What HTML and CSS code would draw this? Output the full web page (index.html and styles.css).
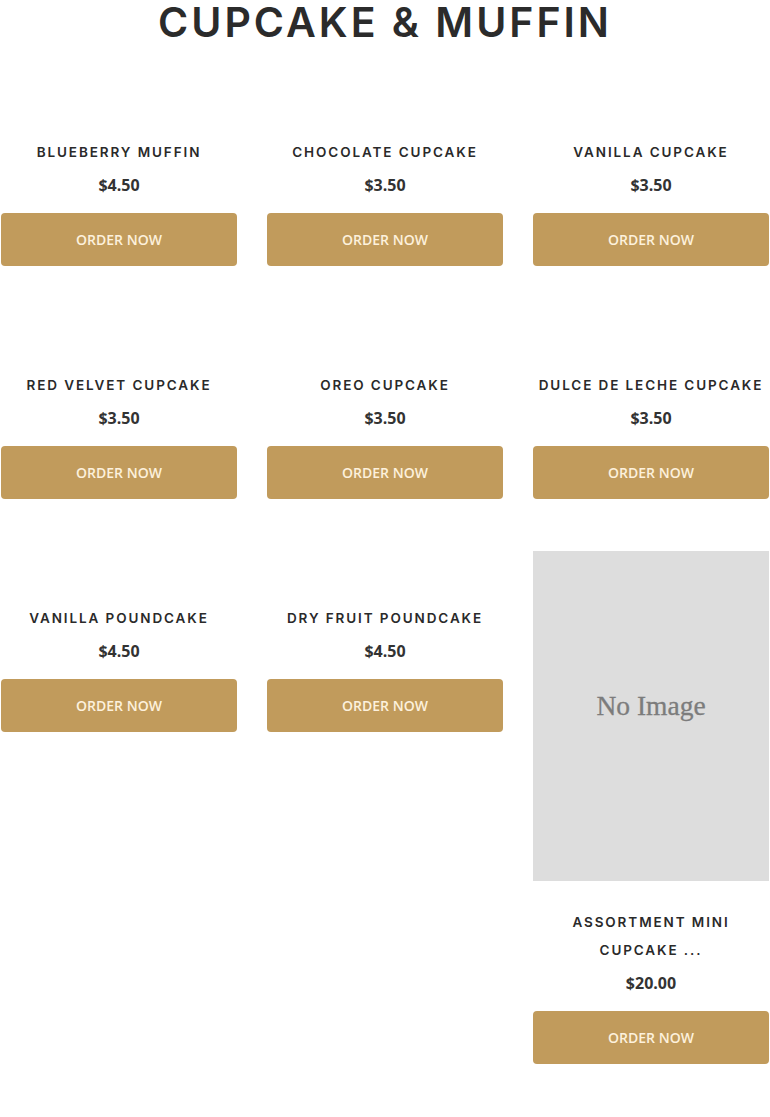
FILE: index.html
```html
<!DOCTYPE html>
<html lang="en">
<head>
<meta charset="utf-8">
<title>Cupcake &amp; Muffin</title>
<link rel="stylesheet" href="styles.css">
</head>
<body>
<main class="page">
  <h1 class="title">CUPCAKE &amp; MUFFIN</h1>
  <div class="grid">
    <div class="card"><div class="thumb"></div><div class="body"><h3 class="name">BLUEBERRY MUFFIN</h3><div class="price">$4.50</div><a class="btn">ORDER NOW</a></div></div>
    <div class="card"><div class="thumb"></div><div class="body"><h3 class="name">CHOCOLATE CUPCAKE</h3><div class="price">$3.50</div><a class="btn">ORDER NOW</a></div></div>
    <div class="card"><div class="thumb"></div><div class="body"><h3 class="name">VANILLA CUPCAKE</h3><div class="price">$3.50</div><a class="btn">ORDER NOW</a></div></div>
    <div class="card"><div class="thumb"></div><div class="body"><h3 class="name">RED VELVET CUPCAKE</h3><div class="price">$3.50</div><a class="btn">ORDER NOW</a></div></div>
    <div class="card"><div class="thumb"></div><div class="body"><h3 class="name">OREO CUPCAKE</h3><div class="price">$3.50</div><a class="btn">ORDER NOW</a></div></div>
    <div class="card"><div class="thumb"></div><div class="body"><h3 class="name">DULCE DE LECHE CUPCAKE</h3><div class="price">$3.50</div><a class="btn">ORDER NOW</a></div></div>
    <div class="card"><div class="thumb"></div><div class="body"><h3 class="name">VANILLA POUNDCAKE</h3><div class="price">$4.50</div><a class="btn">ORDER NOW</a></div></div>
    <div class="card"><div class="thumb"></div><div class="body"><h3 class="name">DRY FRUIT POUNDCAKE</h3><div class="price">$4.50</div><a class="btn">ORDER NOW</a></div></div>
    <div class="card"><div class="thumb noimage"><span>No Image</span></div><div class="body"><h3 class="name">ASSORTMENT MINI<br>CUPCAKE ...</h3><div class="price">$20.00</div><a class="btn">ORDER NOW</a></div></div>
  </div>
</main>
</body>
</html>
```

FILE: styles.css
```css
html, body {
  margin: 0;
  padding: 0;
  background: #ffffff;
}

.page {
  width: 770px;
}

.title {
  margin: 0;
  height: 44px;
  font-family: Inter, "Liberation Sans", sans-serif;
  font-weight: 600;
  font-size: 41px;
  line-height: 44px;
  letter-spacing: 3px;
  text-align: center;
  color: #2b2b2b;
}

.grid {
  display: grid;
  grid-template-columns: repeat(3, 236px);
  column-gap: 30px;
  row-gap: 52px;
  align-items: start;
  padding-left: 1px;
  margin-top: 41px;
}

.card {
  display: flex;
  flex-direction: column;
}

.thumb {
  height: 26px;
}

.thumb.noimage {
  height: 330px;
  background: #dddddd;
  display: flex;
  align-items: center;
  justify-content: center;
}

.thumb.noimage span {
  font-family: "Liberation Serif", serif;
  font-size: 27.5px;
  color: #7c7c7c;
  font-weight: 400;
  -webkit-text-stroke: 0.3px #7c7c7c;
  margin-top: -20px;
}

.body {
  display: flex;
  flex-direction: column;
  align-items: stretch;
  padding-top: 27px;
  text-align: center;
}

.name {
  margin: 0;
  font-family: Inter, "Liberation Sans", sans-serif;
  font-weight: 600;
  font-size: 13.5px;
  line-height: 28px;
  letter-spacing: 1.9px;
  color: #2a2a2a;
}

.price {
  margin-top: 7px;
  font-family: "Open Sans", sans-serif;
  font-weight: 700;
  font-size: 16px;
  line-height: 24px;
  color: #333333;
}

.btn {
  margin-top: 16px;
  height: 53px;
  display: flex;
  align-items: center;
  justify-content: center;
  background: #c19b5c;
  border-radius: 4px;
  font-family: "Open Sans", sans-serif;
  font-weight: 600;
  font-size: 14px;
  color: #fdf1dc;
  text-decoration: none;
}
```
